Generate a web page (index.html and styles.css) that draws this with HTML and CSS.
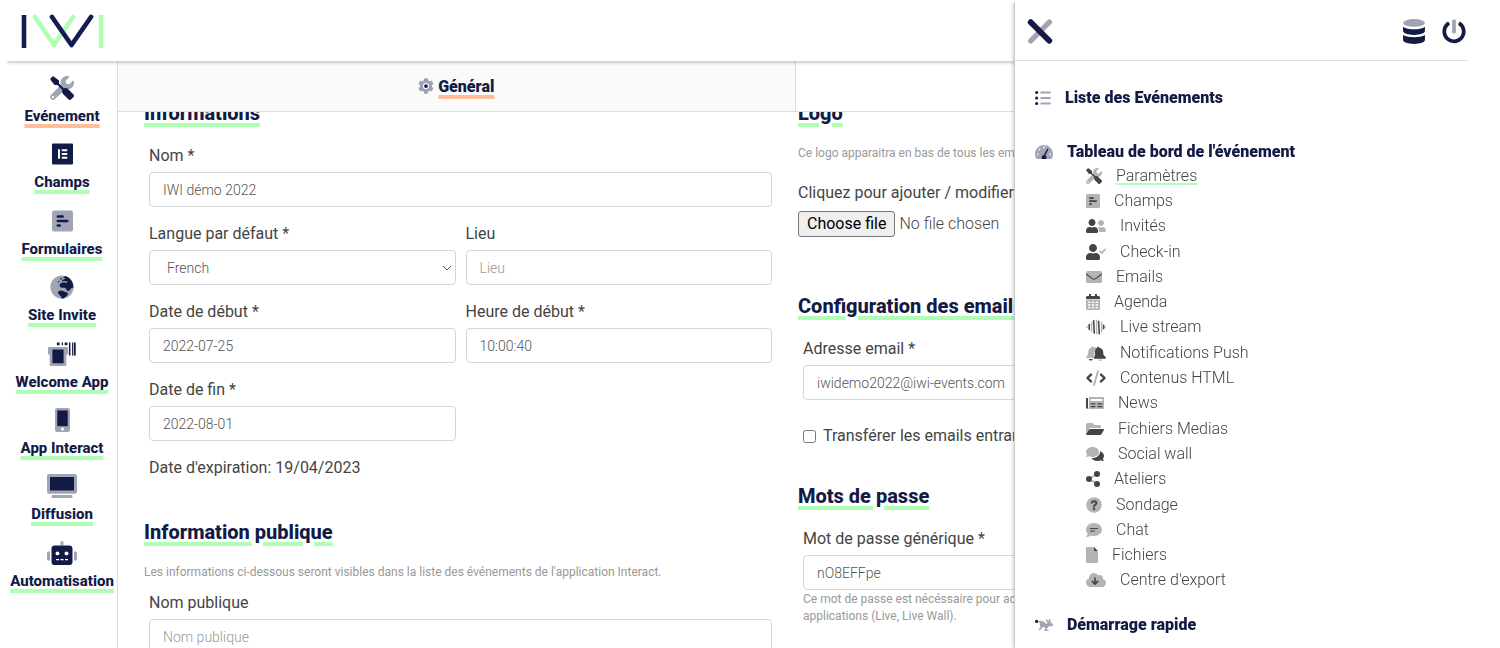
FILE: index.html
```html
<!DOCTYPE html>
<html lang="fr">
  <head>
    <meta charset="UTF-8" />
    <meta name="viewport" content="width=device-width, initial-scale=1" />
    <title>IWI - Paramètres</title>
    <link rel="stylesheet" href="styles.css">
  </head>
  <body>
    <!-- Icon sprite -->
    <svg class="sprite" aria-hidden="true">
      <symbol id="i-tools" viewBox="0 0 512 512">
        <path class="fade" d="M507.73 109.1c-2.24-9.03-13.54-12.09-20.12-5.51l-74.36 74.36-67.88-11.31-11.31-67.88 74.36-74.36c6.62-6.62 3.43-17.9-5.66-20.16-47.38-11.74-99.55.91-136.58 37.93-39.64 39.64-50.55 97.1-34.05 147.2L18.74 402.76c-24.99 24.99-24.99 65.51 0 90.5 24.99 24.99 65.51 24.99 90.5 0l213.21-213.21c50.12 16.71 107.47 5.68 147.37-34.22 37.07-37.07 49.7-89.32 37.91-136.73zM64 472c-13.25 0-24-10.75-24-24 0-13.26 10.75-24 24-24s24 10.74 24 24c0 13.25-10.75 24-24 24z"/>
        <path d="M501.1 395.7L384 278.6c-23.1-23.1-57.6-27.6-85.4-13.9L192 158.1V96L78 10Q64 0 52 12L12 52Q0 64 10 78l86 114h62.1l106.6 106.6c-13.6 27.8-9.2 62.3 13.9 85.4l117.1 117.1c14.6 14.6 38.2 14.6 52.7 0l52.7-52.7c14.5-14.6 14.5-38.2 0-52.7z"/>
      </symbol>
      <symbol id="i-elementor" viewBox="0 0 448 512">
        <rect y="32" width="448" height="448" rx="24"/>
        <path class="hole" d="M128 156h42v200h-42zM208 156h118v40H208zM208 236h118v40H208zM208 316h118v40H208z"/>
      </symbol>
      <symbol id="i-poll" viewBox="0 0 448 512">
        <rect class="fade" y="32" width="448" height="448" rx="48"/>
        <path class="line" stroke-width="56" d="M124 160h104M124 256h200M124 352h40"/>
      </symbol>
      <symbol id="i-globe" viewBox="0 0 512 512">
        <circle class="fade" cx="256" cy="256" r="248"/>
        <path d="M330 20c-18 18-44 22-50 44 16 8 34-6 44 12-14 22-48 18-66 40-8 20 22 22 38 12 22-8 34 14 52 6 20-4 30 22 14 30-34 6-62-8-96-2-26 8-54 24-60 52-6 30 18 54 48 58 30 2 52-4 74 8 26 14 20 44 42 58 20 12 38-4 52-20 22-24 30-56 76-46A248 248 0 0 0 330 20z"/>
        <path d="M184 346c34-20 74-18 108 0 26 14 62 14 84 36 14 22-4 50-24 68-22 22-46 46-84 54-26-6-28-36-44-56-20-22-46-38-54-64-2-14 2-30 14-38z"/>
        <path d="M216 76l34-20 8 26-28 26zM170 136l28-12 6 22-28 12z"/>
      </symbol>
      <symbol id="i-welcome" viewBox="0 0 600 512">
        <path class="fade" d="M16 104h396q16 0 16 16v148h-36v216q0 28-28 28H64q-28 0-28-28V268H0V120q0-16 16-16z"/>
        <path d="M94 158h240v296H94zM190 10h58v56h-58zM294 10h28v56h-28zM358 10h58v56h-58zM448 10h32v280h-32zM516 10h24v280h-24zM554 10h40v280h-40z"/>
      </symbol>
      <symbol id="i-phone" viewBox="0 0 320 512">
        <rect class="fade" width="320" height="512" rx="48"/>
        <path d="M48 52h224v336H48z"/>
        <circle class="hole" cx="160" cy="446" r="32"/>
      </symbol>
      <symbol id="i-screen" viewBox="0 0 640 512">
        <path class="fade" d="M48 0h544q48 0 48 48v324q0 48-48 48H48q-48 0-48-48V48Q0 0 48 0zM128 448h384q32 0 32 32t-32 32H128q-32 0-32-32t32-32z"/>
        <path d="M64 64h512v288H64z"/>
      </symbol>
      <symbol id="i-robot" viewBox="0 0 640 512">
        <path class="fade" d="M0 256q0-32 32-32h32v192H32q-32 0-32-32zM576 224h32q32 0 32 32v128q0 32-32 32h-32zM288 96V32a32 32 0 0 1 64 0v64z"/>
        <rect x="96" y="96" width="448" height="416" rx="72"/>
        <g class="hole">
          <circle cx="224" cy="264" r="42"/>
          <circle cx="416" cy="264" r="42"/>
          <path d="M192 384h64v28h-64zM288 384h64v28h-64zM384 384h64v28h-64z"/>
        </g>
      </symbol>
      <symbol id="i-cog" viewBox="0 0 512 512">
        <path class="fade" d="M487.4 315.7l-42.6-24.6c4.3-23.2 4.3-47 0-70.2l42.6-24.6c4.9-2.8 7.1-8.6 5.5-14-11.1-35.6-30-67.8-54.7-94.6-3.8-4.1-10-5.1-14.8-2.3L380.8 110c-17.9-15.4-38.5-27.3-60.8-35.1V25.8c0-5.6-3.9-10.5-9.4-11.7-36.7-8.2-74.3-7.8-109.2 0-5.5 1.2-9.4 6.1-9.4 11.7V75c-22.2 7.9-42.8 19.8-60.8 35.1L88.7 85.5c-4.9-2.8-11-1.9-14.8 2.3-24.7 26.7-43.6 58.9-54.7 94.6-1.7 5.4.6 11.2 5.5 14L67.3 221c-4.3 23.2-4.3 47 0 70.2l-42.6 24.6c-4.9 2.8-7.1 8.6-5.5 14 11.1 35.6 30 67.8 54.7 94.6 3.8 4.1 10 5.1 14.8 2.3l42.6-24.6c17.9 15.4 38.5 27.3 60.8 35.1v49.2c0 5.6 3.9 10.5 9.4 11.7 36.7 8.2 74.3 7.8 109.2 0 5.5-1.2 9.4-6.1 9.4-11.7v-49.2c22.2-7.9 42.8-19.8 60.8-35.1l42.6 24.6c4.9 2.8 11 1.9 14.8-2.3 24.7-26.7 43.6-58.9 54.7-94.6 1.5-5.5-.7-11.3-5.6-14.1zM256 356a100 100 0 1 1 0-200 100 100 0 0 1 0 200z"/>
        <circle cx="256" cy="256" r="60"/>
      </symbol>
      <symbol id="i-close" viewBox="0 0 512 512">
        <path class="line fade" stroke-width="110" d="M446 66L66 446"/>
        <path class="line" stroke-width="120" d="M66 66l380 380"/>
      </symbol>
      <symbol id="i-database" viewBox="0 0 448 512">
        <ellipse class="fade" cx="224" cy="80" rx="224" ry="80"/>
        <path d="M0 160c50 36 138 52 224 52s174-16 224-52v88c0 44-100 80-224 80S0 292 0 248zM0 328c50 32 138 46 224 46s174-14 224-46v104c0 44-100 80-224 80S0 476 0 432z"/>
      </symbol>
      <symbol id="i-power" viewBox="0 0 512 512">
        <path d="M400 54.1c63 45 104 118.6 104 201.9 0 136.8-110.8 247.7-247.5 248C120 504.3 8.2 393 8 256.4 7.9 173.1 48.9 99.3 111.8 54.2c11.7-8.3 28-4.8 35 7.7L162.6 90c5.9 10.5 3.1 23.8-6.6 31-41.5 30.8-68 79.6-68 134.9-.1 92.3 74.5 168.1 168 168.1 91.6 0 168.6-74.2 168-169.1-.3-51.8-24.7-101.8-68.1-134-9.7-7.2-12.4-20.5-6.5-30.9l15.8-28.1c7-12.4 23.2-16.1 34.8-7.8z"/>
        <rect class="fade" x="216" width="80" height="296" rx="28"/>
      </symbol>
      <symbol id="i-list" viewBox="0 0 512 512">
        <path class="line fade" stroke-width="60" d="M200 80h282M200 256h282M200 432h282"/>
        <circle cx="52" cy="80" r="50"/>
        <circle cx="52" cy="256" r="50"/>
        <circle cx="52" cy="432" r="50"/>
      </symbol>
      <symbol id="i-gauge" viewBox="0 0 576 512">
        <path class="fade" d="M288 32C128.94 32 0 160.94 0 320c0 52.8 14.25 102.26 39.06 144.8 5.61 9.62 16.3 15.2 27.44 15.2h443c11.14 0 21.83-5.58 27.44-15.2C561.75 422.26 576 372.8 576 320c0-159.06-128.94-288-288-288z"/>
        <g class="hole">
          <circle cx="288" cy="110" r="28"/>
          <circle cx="146" cy="170" r="28"/>
          <circle cx="90" cy="320" r="28"/>
          <circle cx="486" cy="320" r="28"/>
        </g>
        <path class="line" stroke-width="46" d="M404 176L310 350"/>
        <path d="M224 480c-24-60 10-126 70-126s90 66 62 126z"/>
      </symbol>
      <symbol id="i-users" viewBox="0 0 640 512">
        <path d="M192 256c61.9 0 112-50.1 112-112S253.9 32 192 32 80 82.1 80 144s50.1 112 112 112zm76.8 32h-8.3c-20.8 10-43.9 16-68.5 16s-47.6-6-68.5-16h-8.3C51.6 288 0 339.6 0 403.2V432c0 26.5 21.5 48 48 48h288c26.5 0 48-21.5 48-48v-28.8c0-63.6-51.6-115.2-115.2-115.2z"/>
        <path class="fade" d="M480 256c53 0 96-43 96-96s-43-96-96-96-96 43-96 96 43 96 96 96zm48 32h-3.8c-13.9 4.8-28.6 8-44.2 8s-30.3-3.2-44.2-8H432c-20.4 0-39.2 5.9-55.7 15.4 24.4 26.3 39.7 61.2 39.7 99.8v38.4c0 2.2-.5 4.3-.6 6.4H592c26.5 0 48-21.5 48-48 0-61.9-50.1-112-112-112z"/>
      </symbol>
      <symbol id="i-user-check" viewBox="0 0 640 512">
        <path d="M224 256c70.7 0 128-57.3 128-128S294.7 0 224 0 96 57.3 96 128s57.3 128 128 128zm89.6 32h-16.7c-22.2 10.2-46.9 16-72.9 16s-50.6-5.8-72.9-16h-16.7C60.2 288 0 348.2 0 422.4V464c0 26.5 21.5 48 48 48h352c26.5 0 48-21.5 48-48v-41.6c0-74.2-60.2-134.4-134.4-134.4z"/>
        <path class="line fade" stroke-width="52" d="M446 232l58 60 108-120"/>
      </symbol>
      <symbol id="i-envelope" viewBox="0 0 512 512">
        <rect class="fade" y="64" width="512" height="384" rx="48"/>
        <path class="line" stroke-width="34" d="M18 168l184 142q54 38 108 0l184-142"/>
      </symbol>
      <symbol id="i-calendar" viewBox="0 0 448 512">
        <path d="M0 160v-48q0-48 48-48h352q48 0 48 48v48zM96 0h64v110H96zM288 0h64v110h-64z"/>
        <path class="fade" fill-rule="evenodd" d="M0 176h448v288q0 48-48 48H48q-48 0-48-48zM64 236v48h76v-48zM186 236v48h76v-48zM308 236v48h76v-48zM64 324v48h76v-48zM186 324v48h76v-48zM308 324v48h76v-48zM64 412v44h76v-44zM186 412v44h76v-44zM308 412v44h76v-44z"/>
      </symbol>
      <symbol id="i-wave" viewBox="0 0 640 512">
        <path class="line fade" stroke-width="44" d="M22 256h34M178 110v290M338 40v432M498 90v320M584 256h34"/>
        <path class="line" stroke-width="50" d="M104 180v152M244 50l20 400M404 70l20 400M562 200v112"/>
      </symbol>
      <symbol id="i-bells" viewBox="0 0 640 512">
        <path class="fade" d="M180 42q20-18 40 0l6 26c60-2 110 20 136 60-70 30-100 90-96 160 4 70-20 100-40 130H24c-20-4-30-28-14-44 40-30 62-70 60-130-4-90 50-156 110-176z"/>
        <path d="M90 444h124c0 60-110 80-124 0zM370 62q20-26 46 0l4 26c92 4 132 82 130 156-2 70 30 104 72 134 26 20 22 62-14 62H272c-30-6-32-38-12-58 30-34 36-60 28-130-8-90 22-156 82-176z"/>
        <path class="fade" d="M400 464h124c-14 60-110 60-124 0z"/>
      </symbol>
      <symbol id="i-code" viewBox="0 0 640 512">
        <path class="line fade" stroke-width="60" d="M384 34L256 478"/>
        <path class="line" stroke-width="76" d="M160 146L46 256l114 110M480 146l114 110-114 110"/>
      </symbol>
      <symbol id="i-news" viewBox="0 0 576 512">
        <path class="fade" d="M96 64h456q24 0 24 24v336q0 24-24 24H64q32-10 32-40z"/>
        <path d="M64 96v312a32 32 0 0 1-64 0V120q0-24 24-24zM152 260h150v44H152zM370 260h150v44H370zM152 348h150v44H152zM370 348h150v44H370z"/>
        <path class="hole" d="M152 128h368v64H152z"/>
      </symbol>
      <symbol id="i-folder" viewBox="0 0 576 512">
        <path class="fade" d="M48 64h160l64 64h160q48 0 48 48v48H152q-42 0-62 36L0 416V112q0-48 48-48z"/>
        <path d="M152 256h400q36 0 20 32l-72 128q-18 32-52 32H24q-34 0-18-32l78-128q20-32 68-32z"/>
      </symbol>
      <symbol id="i-comments" viewBox="0 0 576 512">
        <path class="fade" d="M416 192c0-88.4-93.1-160-208-160S0 103.6 0 192c0 34.3 14.1 65.9 38 92-13.4 30.2-35.5 54.2-35.8 54.5-2.2 2.3-2.8 5.7-1.5 8.7S4.8 352 8 352c36.6 0 66.9-12.3 88.7-25 32.2 15.7 70.3 25 111.3 25 114.9 0 208-71.6 208-160z"/>
        <path d="M538 412c23.9-26 38-57.7 38-92 0-66.9-53.5-124.2-129.3-148.1.9 6.6 1.3 13.3 1.3 20.1 0 105.9-107.7 192-240 192-10.8 0-21.3-.8-31.7-1.9C207.8 439.6 281.8 480 368 480c41 0 79.1-9.2 111.3-25 21.8 12.7 52.1 25 88.7 25 3.2 0 6.1-1.9 7.3-4.8 1.3-2.9.7-6.3-1.5-8.7-.3-.3-22.4-24.2-35.8-54.5z"/>
      </symbol>
      <symbol id="i-share" viewBox="0 0 448 512">
        <path class="line fade" stroke-width="56" d="M352 96L96 256l256 160"/>
        <circle cx="352" cy="96" r="96"/>
        <circle cx="96" cy="256" r="96"/>
        <circle cx="352" cy="416" r="96"/>
      </symbol>
      <symbol id="i-question" viewBox="0 0 512 512">
        <circle class="fade" cx="256" cy="256" r="248"/>
        <path class="line" stroke-width="62" d="M182 186c20-72 150-66 150 12 0 52-74 50-74 104"/>
        <circle cx="258" cy="380" r="40"/>
      </symbol>
      <symbol id="i-chat" viewBox="0 0 512 512">
        <path class="fade" d="M256 32C114.6 32 0 125.1 0 240c0 49.6 21.4 95 57 130.7C44.5 421.1 2.7 466 2.2 466.5A8 8 0 0 0 8 480c66.3 0 116-31.8 140.6-51.4 32.7 12.3 69 19.4 107.4 19.4 141.4 0 256-93.1 256-208S397.4 32 256 32z"/>
        <path class="line" stroke-width="32" d="M144 208h224M144 288h128"/>
      </symbol>
      <symbol id="i-file" viewBox="0 0 384 512">
        <path class="fade" d="M24 0h232v128h128v360q0 24-24 24H24q-24 0-24-24V24Q0 0 24 0z"/>
        <path d="M256 0l128 128H256z"/>
      </symbol>
      <symbol id="i-cloud" viewBox="0 0 640 512">
        <path class="fade" d="M537.6 226.6c4.1-10.7 6.4-22.4 6.4-34.6 0-53-43-96-96-96-19.7 0-38.1 6-53.3 16.2C367 64.2 315.3 32 256 32c-88.4 0-160 71.6-160 160 0 2.7.1 5.4.2 8.1C40.2 219.8 0 273.2 0 336c0 79.5 64.5 144 144 144h368c70.7 0 128-57.3 128-128 0-61.9-44-113.6-102.4-125.4z"/>
        <path class="line" stroke-width="52" d="M288 190v190M200 300l88 86 88-86"/>
      </symbol>
      <symbol id="i-rabbit" viewBox="0 0 576 512">
        <path class="fade" d="M96 150c60-50 150-40 210 20l74 60 14-50c-40-50-60-90-40-110 24-10 60 40 80 80 0-50 10-90 34-84 24 10 34 60 26 110 50 10 82 46 82 80 0 26-30 40-70 40h-60l-50 60-40 50h60c20 0 30 34 10 44H320c-30 0-20-30 0-50l10-40c-20-40-60-50-90-30l-80 90c-20 18-50-6-34-28l54-76c-40-40-30-100-10-116-20-20-54-30-74-50z"/>
        <circle cx="52" cy="140" r="52"/>
      </symbol>
    </svg>

    <div class="app">
      <header class="topbar">
        <a href="#" class="logo" aria-label="IWI">
          <svg viewBox="0 0 84 36" width="84" height="36" fill="none" stroke-width="4.6" stroke-linecap="round" stroke-linejoin="round">
            <path stroke="#aeffb4" d="M15 3l19 28L53 3"/>
            <path stroke="#131c4e" d="M32 3l19.500 28L71 3"/>
            <path stroke="#131c4e" stroke-linecap="butt" d="M4 1v33"/>
            <path stroke="#aeffb4" stroke-linecap="butt" d="M81 1v33"/>
          </svg>
        </a>
      </header>

      <div class="layout">
        <nav class="sidebar">
          <a href="#" class="active"><svg class="icon w24"><use href="#i-tools"/></svg><span>Evénement</span></a>
          <a href="#"><svg class="icon w21"><use href="#i-elementor"/></svg><span>Champs</span></a>
          <a href="#"><svg class="icon w21"><use href="#i-poll"/></svg><span>Formulaires</span></a>
          <a href="#"><svg class="icon w24"><use href="#i-globe"/></svg><span>Site Invite</span></a>
          <a href="#"><svg class="icon w28"><use href="#i-welcome"/></svg><span>Welcome App</span></a>
          <a href="#"><svg class="icon w15"><use href="#i-phone"/></svg><span>App Interact</span></a>
          <a href="#"><svg class="icon w30"><use href="#i-screen"/></svg><span>Diffusion</span></a>
          <a href="#"><svg class="icon w30"><use href="#i-robot"/></svg><span>Automatisation</span></a>
        </nav>

        <main class="main">
          <div class="tabs">
            <a href="#" class="tab active"><svg class="icon w16"><use href="#i-cog"/></svg><span>Général</span></a>
            <a href="#" class="tab"></a>
          </div>

          <div class="scroller">
            <form class="content">
              <div class="column">
                <section>
                  <h2>Informations</h2>
                  <div class="fields">
                    <div class="field wide">
                      <label for="nom">Nom *</label>
                      <input type="text" id="nom" value="IWI démo 2022">
                    </div>
                    <div class="field">
                      <label for="langue">Langue par défaut *</label>
                      <select id="langue">
                        <option>French</option>
                      </select>
                    </div>
                    <div class="field">
                      <label for="lieu">Lieu</label>
                      <input type="text" id="lieu" placeholder="Lieu">
                    </div>
                    <div class="field">
                      <label for="debut">Date de début *</label>
                      <input type="text" id="debut" value="2022-07-25">
                    </div>
                    <div class="field">
                      <label for="heure">Heure de début *</label>
                      <input type="text" id="heure" value="10:00:40">
                    </div>
                    <div class="field">
                      <label for="fin">Date de fin *</label>
                      <input type="text" id="fin" value="2022-08-01">
                    </div>
                    <p class="text wide">Date d'expiration: 19/04/2023</p>
                  </div>
                </section>
                <section>
                  <h2>Information publique</h2>
                  <p class="help">Les informations ci-dessous seront visibles dans la liste des événements de l'application Interact.</p>
                  <div class="fields">
                    <div class="field wide">
                      <label for="public">Nom publique</label>
                      <input type="text" id="public" placeholder="Nom publique">
                    </div>
                  </div>
                </section>
              </div>

              <div class="column">
                <section class="logo-section">
                  <h2>Logo</h2>
                  <p class="help">Ce logo apparaitra en bas de tous les emails</p>
                  <p class="text">Cliquez pour ajouter / modifier</p>
                  <div class="file">
                    <input type="file" id="logo" class="file-input">
                    <label for="logo" class="file-btn">Choose file</label>
                    <span>No file chosen</span>
                  </div>
                </section>
                <section>
                  <h2>Configuration des emails</h2>
                  <div class="fields">
                    <div class="field wide">
                      <label for="email">Adresse email *</label>
                      <input type="text" id="email" value="iwidemo2022@iwi-events.com">
                    </div>
                    <label class="check wide"><input type="checkbox"> Transférer les emails entrants</label>
                  </div>
                </section>
                <section>
                  <h2>Mots de passe</h2>
                  <div class="fields">
                    <div class="field wide">
                      <label for="pass">Mot de passe générique *</label>
                      <input type="text" id="pass" value="nO8EFFpe">
                      <p class="hint">Ce mot de passe est nécéssaire pour accéder aux<br>applications (Live, Live Wall).</p>
                    </div>
                  </div>
                </section>
              </div>
            </form>
          </div>
        </main>
      </div>
    </div>

    <aside class="drawer">
      <div class="drawer-head">
        <button type="button" class="icon-btn" aria-label="Fermer"><svg class="icon w26"><use href="#i-close"/></svg></button>
        <div class="drawer-actions">
          <button type="button" class="icon-btn" aria-label="Données"><svg class="icon w24"><use href="#i-database"/></svg></button>
          <button type="button" class="icon-btn" aria-label="Déconnexion"><svg class="icon w24"><use href="#i-power"/></svg></button>
        </div>
      </div>
      <nav class="menu">
        <a href="#" class="menu-title"><svg class="icon w16"><use href="#i-list"/></svg>Liste des Evénements</a>
        <a href="#" class="menu-title"><svg class="icon w18"><use href="#i-gauge"/></svg>Tableau de bord de l'événement</a>
        <ul>
          <li><a href="#" class="current"><svg class="icon w16"><use href="#i-tools"/></svg><span>Paramètres</span></a></li>
          <li><a href="#"><svg class="icon w14"><use href="#i-poll"/></svg><span>Champs</span></a></li>
          <li><a href="#"><svg class="icon w20"><use href="#i-users"/></svg><span>Invités</span></a></li>
          <li><a href="#"><svg class="icon w20"><use href="#i-user-check"/></svg><span>Check-in</span></a></li>
          <li><a href="#"><svg class="icon w16"><use href="#i-envelope"/></svg><span>Emails</span></a></li>
          <li><a href="#"><svg class="icon w14"><use href="#i-calendar"/></svg><span>Agenda</span></a></li>
          <li><a href="#"><svg class="icon w20"><use href="#i-wave"/></svg><span>Live stream</span></a></li>
          <li><a href="#"><svg class="icon w20"><use href="#i-bells"/></svg><span>Notifications Push</span></a></li>
          <li><a href="#"><svg class="icon w20"><use href="#i-code"/></svg><span>Contenus HTML</span></a></li>
          <li><a href="#"><svg class="icon w18"><use href="#i-news"/></svg><span>News</span></a></li>
          <li><a href="#"><svg class="icon w18"><use href="#i-folder"/></svg><span>Fichiers Medias</span></a></li>
          <li><a href="#"><svg class="icon w18"><use href="#i-comments"/></svg><span>Social wall</span></a></li>
          <li><a href="#"><svg class="icon w14"><use href="#i-share"/></svg><span>Ateliers</span></a></li>
          <li><a href="#"><svg class="icon w16"><use href="#i-question"/></svg><span>Sondage</span></a></li>
          <li><a href="#"><svg class="icon w16"><use href="#i-chat"/></svg><span>Chat</span></a></li>
          <li><a href="#"><svg class="icon w12"><use href="#i-file"/></svg><span>Fichiers</span></a></li>
          <li><a href="#"><svg class="icon w20"><use href="#i-cloud"/></svg><span>Centre d'export</span></a></li>
        </ul>
        <a href="#" class="menu-title"><svg class="icon w18"><use href="#i-rabbit"/></svg>Démarrage rapide</a>
      </nav>
    </aside>
  </body>
</html>
```
FILE: styles.css
```css
:root {
  --navy: #131b45;
  --green: #aeffb4;
  --orange: #ffbd9b;
  --text: #444;
  --border: #d6d6d6;
}
* {
  box-sizing: border-box;
}
body {
  margin: 0;
  height: 100vh;
  overflow: hidden;
  background: #fff;
  color: var(--text);
  font-family: Roboto, sans-serif;
  font-size: 16px;
}
a {
  color: inherit;
  text-decoration: none;
}
h2, p, ul {
  margin: 0;
  padding: 0;
}
/* Icons: two tones of the current colour */
.sprite {
  display: none;
}
.icon {
  flex: none;
  height: 16px;
  fill: currentColor;
}
.fade {
  opacity: 0.4;
}
.hole {
  fill: #fff;
}
.line {
  fill: none;
  stroke: currentColor;
  stroke-linecap: round;
  stroke-linejoin: round;
}
.w12 { width: 12px; }
.w14 { width: 14px; }
.w15 { width: 15px; }
.w16 { width: 16px; }
.w18 { width: 18px; }
.w20 { width: 20px; }
.w21 { width: 21px; }
.w24 { width: 24px; }
.w26 { width: 26px; }
.w28 { width: 28px; }
.w30 { width: 30px; }

.app {
  display: flex;
  flex-direction: column;
  height: 100%;
  padding: 0 28px 0 7px;
}
.topbar {
  position: relative;
  z-index: 1;
  flex: none;
  height: 61px;
  padding: 14px 13px;
  box-shadow: 0 2px 3px rgba(0, 0, 0, 0.2);
  clip-path: inset(0 0 -6px 0);
}
.logo {
  display: inline-block;
}
.logo svg {
  display: block;
}
.layout {
  display: flex;
  flex: 1;
  min-height: 0;
}
/* Sidebar */
.sidebar {
  display: flex;
  flex: none;
  flex-direction: column;
  width: 111px;
  padding: 15px 0 41px;
  border-right: 1px solid #ddd;
  color: var(--navy);
  font-size: 15px;
  font-weight: 800;
}
.sidebar a {
  display: flex;
  flex: 1;
  flex-direction: column;
  align-items: center;
  gap: 7px;
  line-height: 18px;
  white-space: nowrap;
}
.sidebar .icon {
  height: 24px;
}
.sidebar span,
.tab span,
h2 {
  text-decoration: underline 4px var(--green);
  text-underline-offset: 3px;
}
.sidebar span {
  text-decoration-skip-ink: none;
}
.sidebar .active span,
.tab.active span {
  text-decoration-color: var(--orange);
}
/* Main area */
.main {
  display: flex;
  flex: 1;
  flex-direction: column;
  min-width: 0;
}
.tabs {
  display: flex;
  flex: none;
  height: 51px;
  border-bottom: 1px solid #ddd;
}
.tab {
  display: flex;
  flex: 1;
  align-items: center;
  justify-content: center;
  gap: 4px;
  color: var(--navy);
  font-size: 16px;
  font-weight: 900;
}
.tab.active {
  border-right: 1px solid #ddd;
  background: #fafafa;
}
.scroller {
  flex: 1;
  min-height: 0;
  overflow: hidden;
}
.content {
  display: grid;
  grid-template-columns: 1fr 1fr;
  gap: 21px;
  margin-top: -11px;
  padding: 0 41px 0 26px;
}
.column {
  min-width: 0;
}
section {
  margin-bottom: 41px;
}
h2 {
  margin-bottom: 20px;
  color: var(--navy);
  font-size: 20px;
  font-weight: 800;
  line-height: 24px;
}
.fields {
  display: grid;
  grid-template-columns: 1fr 1fr;
  gap: 16px 10px;
  padding: 0 5px;
}
.field {
  display: flex;
  flex-direction: column;
}
.wide {
  grid-column: 1 / -1;
}
.field label,
.check,
.text {
  font-size: 16px;
  line-height: 22px;
}
.field label {
  margin-bottom: 5px;
}
.field input,
.field select {
  width: 100%;
  height: 35px;
  padding: 0 13px;
  border: 1px solid var(--border);
  border-radius: 4px;
  background: #fff;
  color: #555;
  font-family: inherit;
  font-size: 14px;
  font-weight: 300;
}
.field select {
  padding: 0 17px;
  appearance: none;
  background: #fff url("data:image/svg+xml,%3Csvg xmlns='http://www.w3.org/2000/svg' width='10' height='6' fill='none' stroke='%23555'%3E%3Cpath d='M1 1l4 4 4-4'/%3E%3C/svg%3E") no-repeat right 3px center;
}
.field input::placeholder {
  color: #999;
}
.help,
.hint {
  color: #999;
  font-size: 12px;
  font-weight: 400;
  line-height: 16px;
}
.help {
  margin-bottom: 12px;
}
.hint {
  margin-top: 1px;
  line-height: 17px;
}
.logo-section {
  margin-bottom: 57px;
}
.logo-section .help {
  margin-bottom: 21px;
}
.file {
  display: flex;
  align-items: center;
  gap: 4px;
  margin-top: 7px;
  font-size: 16px;
  font-weight: 300;
  line-height: 20px;
}
.file-input {
  position: absolute;
  opacity: 0;
  pointer-events: none;
}
.file-btn {
  padding: 2px 8px;
  border: 1px solid #767676;
  border-radius: 3px;
  background: #efefef;
  color: #000;
  font-weight: 400;
}
.check {
  display: flex;
  align-items: center;
  gap: 7px;
  margin: 9px 0 -4px;
}
.check input {
  width: 13px;
  height: 13px;
  margin: 0;
}
/* Right drawer */
.drawer {
  position: absolute;
  z-index: 2;
  top: 2px;
  right: 0;
  bottom: 0;
  width: 486px;
  padding-right: 32px;
  border-left: 1px solid #ccc;
  background: #fff;
  box-shadow: 0 0 4px rgba(0, 0, 0, 0.3);
  clip-path: inset(0 0 0 -6px);
}
.drawer-head {
  display: flex;
  align-items: center;
  justify-content: space-between;
  height: 59px;
  padding: 0 2px 0 12px;
  border-bottom: 1px solid #ddd;
}
.drawer-actions {
  display: flex;
  gap: 16px;
}
.icon-btn {
  padding: 0;
  border: 0;
  background: none;
  color: var(--navy);
  cursor: pointer;
}
.icon-btn .icon {
  display: block;
  height: 25px;
}
.menu {
  padding: 26px 0 0 20px;
}
.menu-title {
  display: flex;
  align-items: center;
  gap: 14px;
  margin-bottom: 32px;
  color: var(--navy);
  font-weight: 900;
  line-height: 22px;
}
.menu ul {
  display: flex;
  flex-direction: column;
  min-height: 430px;
  margin: -32px 0 21px;
  padding-left: 51px;
  list-style: none;
  font-weight: 300;
}
.menu li {
  display: flex;
  flex: 1;
  align-items: center;
}
.menu li a {
  display: flex;
  align-items: center;
  gap: 14px;
  line-height: 22px;
}
.menu .current span {
  text-decoration: underline 2px var(--green);
  text-underline-offset: 2px;
}
```
